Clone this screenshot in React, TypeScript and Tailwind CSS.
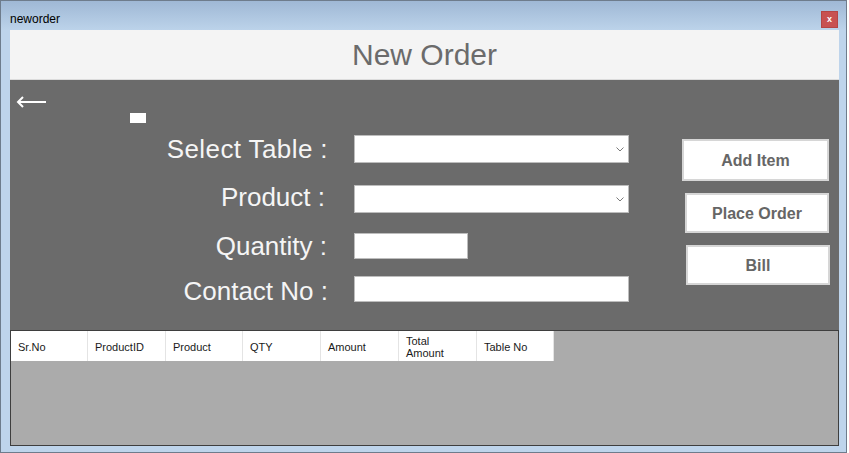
const font = { fontFamily: '"Liberation Sans", Arial, sans-serif' };

function Chevron() {
  return (
    <svg width="8" height="5" viewBox="0 0 8 5" className="block">
      <polyline points="0.5,0.5 4,4 7.5,0.5" fill="none" stroke="#7a7a7a" strokeWidth="1" />
    </svg>
  );
}

function Combo() {
  return (
    <div className="flex h-[28px] w-[275px] items-center justify-end border border-[#bdbdbd] bg-white pr-[4px]">
      <Chevron />
    </div>
  );
}

function FormRow({
  label,
  className,
  labelClass,
  children,
}: {
  label: string;
  className?: string;
  labelClass?: string;
  children: React.ReactNode;
}) {
  return (
    <div className={`flex items-center ${className ?? ''}`}>
      <div className={`w-[318px] text-right text-[26px] leading-none text-[#f5f5f5] ${labelClass ?? ''}`}>{label}</div>
      <div className="ml-[26px]">{children}</div>
    </div>
  );
}

function ActionButton({ label, className }: { label: string; className: string }) {
  return (
    <button
      className={`flex items-center justify-center border-2 border-[#d6d6d6] bg-white pt-[1px] text-[16px] font-bold text-[#666666] ${className}`}
    >
      {label}
    </button>
  );
}

const columns = [
  { label: 'Sr.No', w: 'w-[77px]' },
  { label: 'ProductID', w: 'w-[78px]' },
  { label: 'Product', w: 'w-[77px]' },
  { label: 'QTY', w: 'w-[78px]' },
  { label: 'Amount', w: 'w-[78px]' },
  { label: 'Total Amount', w: 'w-[78px]' },
  { label: 'Table No', w: 'w-[77px]' },
];

export default function App() {
  return (
    <div className="min-h-screen bg-white" style={font}>
      <div className="flex h-[453px] w-[847px] flex-col border border-[#6e7c8c] bg-[#bed4eb]">
        {/* title bar */}
        <div className="flex h-[29px] shrink-0 items-center bg-gradient-to-b from-[#9fb8d5] to-[#bcd3ea] pl-[9px] pr-[8px]">
          <span className="pt-[7px] text-[12px] text-black">neworder</span>
          <div className="ml-auto mt-[7px] flex h-[17px] w-[17px] items-center justify-center border border-[#b54545] bg-[#c85151] text-[9px] font-bold leading-none text-white">
            x
          </div>
        </div>

        <div className="ml-[9px] flex w-[829px] flex-col">
          {/* header */}
          <div className="flex h-[50px] items-center justify-center border-b border-[#dcdcdc] bg-[#f4f4f4] pt-[1px]">
            <h1 className="text-[30px] leading-none text-[#6b6b6b]">New Order</h1>
          </div>

          {/* form panel */}
          <div className="flex h-[250px] flex-col bg-[#6b6b6b]">
            <svg width="32" height="12" viewBox="0 0 32 12" className="ml-[6px] mt-[16px] block">
              <line x1="2" y1="6" x2="30" y2="6" stroke="white" strokeWidth="2" />
              <polyline points="7,1 2,6 7,11" fill="none" stroke="white" strokeWidth="2" />
            </svg>
            <div className="ml-[120px] mt-[5px] h-[10px] w-[16px] bg-white" />

            <div className="flex">
              <div className="mt-[12px] flex flex-col">
                <FormRow label="Select Table :" labelClass="tracking-[0.4px]">
                  <Combo />
                </FormRow>
                <FormRow label="Product :" className="mt-[22px]" labelClass="pr-[3px] -mt-[4px]">
                  <Combo />
                </FormRow>
                <FormRow label="Quantity :" className="mt-[20px]" labelClass="pr-[1px]">
                  <div className="h-[26px] w-[114px] border border-[#bdbdbd] bg-white" />
                </FormRow>
                <FormRow label="Contact No :" className="mt-[17px]" labelClass="-mb-[4px]">
                  <div className="h-[26px] w-[275px] border border-[#bdbdbd] bg-white" />
                </FormRow>
              </div>

              <div className="mt-[16px] flex flex-col">
                <ActionButton label="Add Item" className="ml-[53px] h-[42px] w-[147px]" />
                <ActionButton label="Place Order" className="ml-[56px] mt-[12px] h-[40px] w-[144px]" />
                <ActionButton label="Bill" className="ml-[57px] mt-[12px] h-[40px] w-[144px]" />
              </div>
            </div>
          </div>

          {/* grid */}
          <div className="h-[116px] border border-[#3e3e3e] bg-[#ababab]">
            <div className="flex h-[30px]">
              {columns.map((c) => (
                <div
                  key={c.label}
                  className={`flex ${c.w} items-center border-r border-[#e4e4e4] bg-white pl-[7px] pt-[1px] text-[11px] leading-[12px] text-[#1a1a1a]`}
                >
                  {c.label === 'Total Amount' ? (
                    <span>
                      Total
                      <br />
                      Amount
                    </span>
                  ) : (
                    c.label
                  )}
                </div>
              ))}
            </div>
          </div>
        </div>
      </div>
    </div>
  );
}
